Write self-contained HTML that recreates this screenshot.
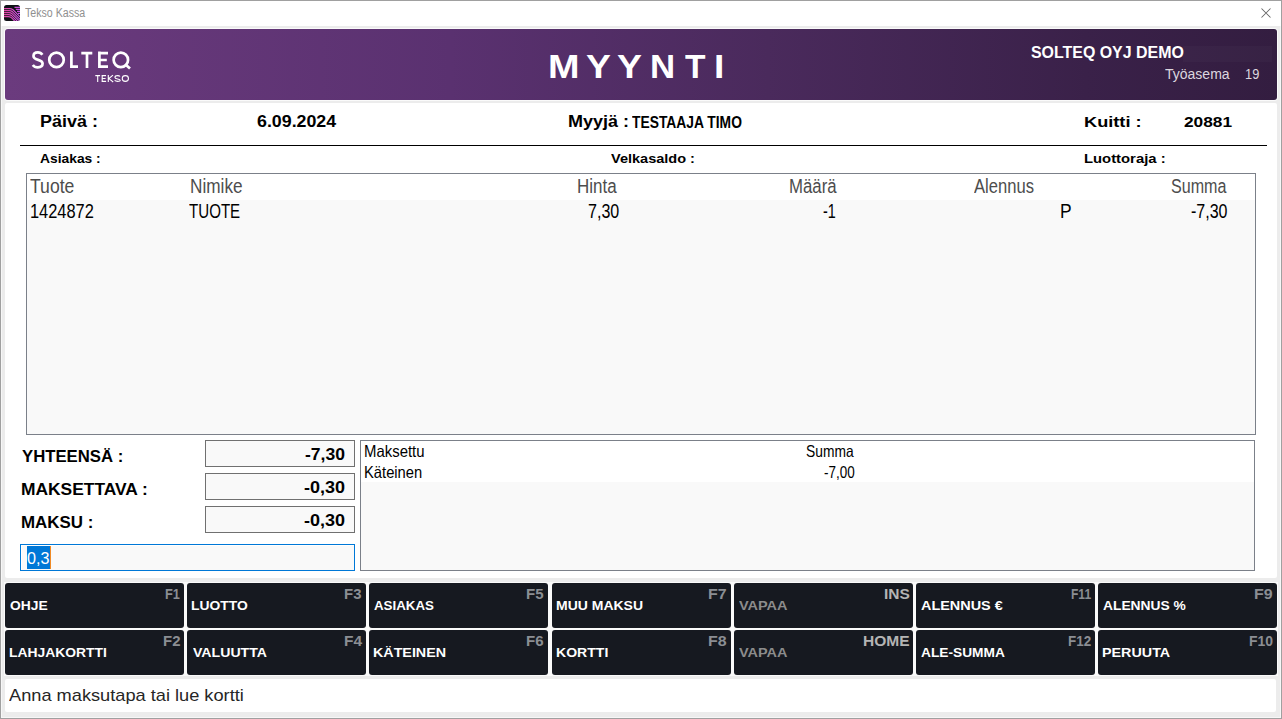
<!DOCTYPE html>
<html><head><meta charset="utf-8"><title>Tekso Kassa</title>
<style>
html,body{margin:0;padding:0;}
body{width:1282px;height:719px;overflow:hidden;position:relative;background:#eeeeee;font-family:"Liberation Sans",sans-serif;}
.t{position:absolute;white-space:nowrap;transform-origin:0 0;}
.btn{position:absolute;background:#161920;border-radius:3px;}
</style></head><body>

<div style="position:absolute;left:0px;top:0px;width:1282px;height:719px;background:#a0a0a0;"></div>
<div style="position:absolute;left:1px;top:1px;width:1280px;height:717px;background:#f7f7f7;"></div>
<div style="position:absolute;left:1px;top:1px;width:1279px;height:716px;background:#ececec;"></div>
<div style="position:absolute;left:1px;top:1px;width:1px;height:716px;background:#f7f7f7;"></div>
<div style="position:absolute;left:1px;top:1px;width:1280px;height:25px;background:#ffffff;"></div>
<svg style="position:absolute;left:4px;top:5px" width="16" height="16" viewBox="0 0 16 16">
<defs><clipPath id="ic"><rect x="0" y="0" width="16" height="16" rx="2.5"/></clipPath>
<linearGradient id="ig" gradientUnits="userSpaceOnUse" x1="0" y1="0" x2="16" y2="0"><stop offset="0" stop-color="#e2459e"/><stop offset="1" stop-color="#c653e6"/></linearGradient></defs>
<rect x="0" y="0" width="16" height="16" rx="2.5" fill="#101217"/>
<g clip-path="url(#ic)" fill="none" stroke="url(#ig)" stroke-width="1.15">
<path d="M-1 3.6 H5.5 Q7.5 3.6 9 4.8 L21 16.8"/>
<path d="M-1 5.6 H5.2 Q7.2 5.6 8.6 6.8 L18.5 16.8"/>
<path d="M-1 7.6 H4.8 Q6.8 7.6 8.2 8.8 L16.2 16.8"/>
<path d="M-1 9.6 H4.4 Q6.4 9.6 7.8 10.8 L13.8 16.8"/>
<path d="M-1 11.6 H3.5 Q5.8 11.4 7.4 12.6 L11.4 16.8"/>
<path d="M10.5 2.4 H17"/><path d="M11.8 4.4 H17"/><path d="M13 6.4 H17"/><path d="M14 8.4 H17"/>
</g></svg>
<span class="t" style="left:25.10px;top:6px;font-weight:400;font-size:13.08px;line-height:13.08px;color:#8f8f8f;transform:scaleX(0.8122);">Tekso Kassa</span>
<svg style="position:absolute;left:1260px;top:7px" width="12" height="12" viewBox="0 0 12 12">
<path d="M1.5 1.5 L10.5 10.5 M10.5 1.5 L1.5 10.5" stroke="#666666" stroke-width="1.05" fill="none"/></svg>
<div style="position:absolute;left:5px;top:29px;width:1272px;height:71px;box-shadow:0 0 0 1px #fafafa;background:linear-gradient(90deg,#6b3b7e 0%,#5a3170 35%,#4a2a5c 60%,#3a2149 85%,#331d40 100%);border-radius:3px;"></div>
<div style="position:absolute;left:1183px;top:46px;width:89px;height:16px;background:rgba(255,255,255,0.025);"></div>
<svg style="position:absolute;left:0;top:0" width="140" height="90" viewBox="0 0 140 90">
<g fill="none" stroke="#ffffff" stroke-width="2.7" stroke-linecap="butt">
<path d="M42.4 54.7 C41.4 53.2 39.7 52.4 37.9 52.4 C35.3 52.4 33.5 53.8 33.5 56.0 C33.5 61.2 42.6 58.6 42.6 63.6 C42.6 65.9 40.7 67.4 37.8 67.4 C35.7 67.4 33.9 66.5 32.8 65.0"/>
<circle cx="56.5" cy="59.9" r="7.25"/>
<path d="M71.4 51.6 V66.7 H78"/>
<path d="M81.3 53.2 H92.3 M87.0 53.2 V68"/>
<path d="M99.4 51.6 V68 M98.1 53.2 H108 M98.1 60.0 H106.8 M98.1 66.6 H108"/>
<circle cx="120.85" cy="59.9" r="7.2"/>
<path d="M125.2 64.2 L130.0 68.6"/>
</g>
<g fill="none" stroke="#ffffff" stroke-width="1.1">
<path d="M95.3 75.65 H100.1 M97.7 75.65 V82"/>
<path d="M102.2 75 V82 M101.6 75.65 H106 M101.6 78.5 H105.6 M101.6 81.35 H106.1"/>
<path d="M108.3 75 V82 M113 75.1 L108.9 78.6 L113.2 82"/>
<path d="M120.0 76.5 C119.6 75.95 118.7 75.65 117.6 75.65 C116.0 75.65 114.95 76.35 114.95 77.45 C114.95 79.6 120.25 78.4 120.25 80.5 C120.25 81.0 119.3 81.35 117.6 81.35 C116.3 81.35 115.3 81.0 114.6 80.4"/>
<ellipse cx="125.35" cy="78.5" rx="3.1" ry="2.85"/>
</g></svg>
<span class="t" style="left:547.59px;top:51px;font-weight:700;font-size:32.70px;line-height:32.70px;color:#ffffff;transform:scaleX(1.1565);">M</span>
<span class="t" style="left:586.06px;top:51px;font-weight:700;font-size:32.70px;line-height:32.70px;color:#ffffff;transform:scaleX(1.1400);">Y</span>
<span class="t" style="left:617.15px;top:51px;font-weight:700;font-size:32.70px;line-height:32.70px;color:#ffffff;transform:scaleX(1.1450);">Y</span>
<span class="t" style="left:650.47px;top:51px;font-weight:700;font-size:32.70px;line-height:32.70px;color:#ffffff;transform:scaleX(1.0650);">N</span>
<span class="t" style="left:684.50px;top:51px;font-weight:700;font-size:32.70px;line-height:32.70px;color:#ffffff;transform:scaleX(1.0250);">T</span>
<span class="t" style="left:714.22px;top:51px;font-weight:700;font-size:32.70px;line-height:32.70px;color:#ffffff;transform:scaleX(1.1400);">I</span>
<span class="t" style="left:1031.08px;top:45px;font-weight:700;font-size:15.70px;line-height:15.70px;color:#ffffff;transform:scaleX(1.0154);">SOLTEQ OYJ DEMO</span>
<span class="t" style="left:1164.70px;top:67px;font-weight:400;font-size:14.39px;line-height:14.39px;color:#dcd6df;transform:scaleX(0.9742);">Työasema</span>
<span class="t" style="left:1244.91px;top:67px;font-weight:400;font-size:14.39px;line-height:14.39px;color:#dcd6df;transform:scaleX(0.8929);">19</span>
<div style="position:absolute;left:5px;top:103px;width:1272px;height:475px;background:#ffffff;border-radius:2px;"></div>
<span class="t" style="left:39.61px;top:113px;font-weight:700;font-size:16.42px;line-height:16.42px;color:#000000;transform:scaleX(1.0941);">Päivä :</span>
<span class="t" style="left:257.22px;top:113px;font-weight:700;font-size:16.42px;line-height:16.42px;color:#000000;transform:scaleX(1.0847);">6.09.2024</span>
<span class="t" style="left:567.88px;top:113px;font-weight:700;font-size:16.13px;line-height:16.13px;color:#000000;transform:scaleX(1.1173);">Myyjä :</span>
<span class="t" style="left:632.10px;top:114px;font-weight:700;font-size:16.42px;line-height:16.42px;color:#000000;transform:scaleX(0.8431);">TESTAAJA TIMO</span>
<span class="t" style="left:1083.83px;top:114px;font-weight:700;font-size:15.55px;line-height:15.55px;color:#000000;transform:scaleX(1.1702);">Kuitti :</span>
<span class="t" style="left:1184.00px;top:114px;font-weight:700;font-size:15.55px;line-height:15.55px;color:#000000;transform:scaleX(1.1116);">20881</span>
<span class="t" style="left:40.30px;top:152px;font-weight:700;font-size:13.37px;line-height:13.37px;color:#000000;transform:scaleX(1.0345);">Asiakas :</span>
<span class="t" style="left:610.70px;top:152px;font-weight:700;font-size:13.52px;line-height:13.52px;color:#000000;transform:scaleX(1.0740);">Velkasaldo :</span>
<span class="t" style="left:1083.85px;top:153px;font-weight:700;font-size:12.94px;line-height:12.94px;color:#000000;transform:scaleX(1.1464);">Luottoraja :</span>
<div style="position:absolute;left:20px;top:145px;width:1247px;height:1px;background:#000000;"></div>
<div style="position:absolute;left:26px;top:173px;width:1230px;height:262px;box-sizing:border-box;border:1px solid #7b8089;background:#f9f9f9;"></div>
<div style="position:absolute;left:27px;top:174px;width:1228px;height:26px;background:#ffffff;"></div>
<span class="t" style="left:30.20px;top:177px;font-weight:400;font-size:19.91px;line-height:19.91px;color:#4d4d4d;transform:scaleX(0.8837);">Tuote</span>
<span class="t" style="left:190.47px;top:177px;font-weight:400;font-size:19.91px;line-height:19.91px;color:#4d4d4d;transform:scaleX(0.8638);">Nimike</span>
<span class="t" style="left:577.09px;top:177px;font-weight:400;font-size:19.91px;line-height:19.91px;color:#4d4d4d;transform:scaleX(0.8533);">Hinta</span>
<span class="t" style="left:789.21px;top:177px;font-weight:400;font-size:19.91px;line-height:19.91px;color:#4d4d4d;transform:scaleX(0.8426);">Määrä</span>
<span class="t" style="left:974.20px;top:177px;font-weight:400;font-size:19.91px;line-height:19.91px;color:#4d4d4d;transform:scaleX(0.8338);">Alennus</span>
<span class="t" style="left:1170.59px;top:177px;font-weight:400;font-size:19.91px;line-height:19.91px;color:#4d4d4d;transform:scaleX(0.8088);">Summa</span>
<span class="t" style="left:29.89px;top:201px;font-weight:400;font-size:20.35px;line-height:20.35px;color:#000000;transform:scaleX(0.8065);">1424872</span>
<span class="t" style="left:188.50px;top:201px;font-weight:400;font-size:20.35px;line-height:20.35px;color:#000000;transform:scaleX(0.7426);">TUOTE</span>
<span class="t" style="left:588.01px;top:201px;font-weight:400;font-size:20.35px;line-height:20.35px;color:#000000;transform:scaleX(0.7895);">7,30</span>
<span class="t" style="left:823.39px;top:201px;font-weight:400;font-size:20.35px;line-height:20.35px;color:#000000;transform:scaleX(0.7062);">-1</span>
<span class="t" style="left:1060.19px;top:201px;font-weight:400;font-size:20.35px;line-height:20.35px;color:#000000;transform:scaleX(0.8545);">P</span>
<span class="t" style="left:1191.31px;top:201px;font-weight:400;font-size:20.35px;line-height:20.35px;color:#000000;transform:scaleX(0.7867);">-7,30</span>
<span class="t" style="left:21.70px;top:448px;font-weight:700;font-size:16.28px;line-height:16.28px;color:#000000;transform:scaleX(1.0278);">YHTEENSÄ :</span>
<span class="t" style="left:20.91px;top:482px;font-weight:700;font-size:15.99px;line-height:15.99px;color:#000000;transform:scaleX(1.0877);">MAKSETTAVA :</span>
<span class="t" style="left:20.94px;top:515px;font-weight:700;font-size:15.99px;line-height:15.99px;color:#000000;transform:scaleX(1.0576);">MAKSU :</span>
<div style="position:absolute;left:205px;top:440px;width:150px;height:27px;box-sizing:border-box;border:1px solid #707070;background:#f9f9f9;"></div>
<div style="position:absolute;left:205px;top:473px;width:150px;height:27px;box-sizing:border-box;border:1px solid #707070;background:#f9f9f9;"></div>
<div style="position:absolute;left:205px;top:506px;width:150px;height:27px;box-sizing:border-box;border:1px solid #707070;background:#f9f9f9;"></div>
<span class="t" style="left:304.90px;top:447px;font-weight:700;font-size:15.99px;line-height:15.99px;color:#000000;transform:scaleX(1.0971);">-7,30</span>
<span class="t" style="left:303.87px;top:480px;font-weight:700;font-size:15.99px;line-height:15.99px;color:#000000;transform:scaleX(1.1257);">-0,30</span>
<span class="t" style="left:303.87px;top:513px;font-weight:700;font-size:15.99px;line-height:15.99px;color:#000000;transform:scaleX(1.1257);">-0,30</span>
<div style="position:absolute;left:20px;top:544px;width:335px;height:27px;box-sizing:border-box;border:1px solid #0078d7;background:#f9f9f9;"></div>
<div style="position:absolute;left:21px;top:545px;width:333px;height:25px;box-sizing:border-box;border:1px solid #ffffff;border-right:0;border-bottom:0;"></div>
<div style="position:absolute;left:27px;top:546px;width:24px;height:23px;background:#0078d7;"></div>
<div style="position:absolute;left:50px;top:546px;width:1px;height:23px;background:#f08a24;"></div>
<span class="t" style="left:26.99px;top:551px;font-weight:400;font-size:15.99px;line-height:15.99px;color:#ffffff;transform:scaleX(1.0095);">0,3</span>
<div style="position:absolute;left:360px;top:440px;width:895px;height:131px;box-sizing:border-box;border:1px solid #7b8089;background:#f9f9f9;"></div>
<div style="position:absolute;left:361px;top:441px;width:893px;height:41px;background:#ffffff;"></div>
<span class="t" style="left:363.51px;top:444px;font-weight:400;font-size:16.72px;line-height:16.72px;color:#000000;transform:scaleX(0.8939);">Maksettu</span>
<span class="t" style="left:806.47px;top:444px;font-weight:400;font-size:16.72px;line-height:16.72px;color:#000000;transform:scaleX(0.8263);">Summa</span>
<span class="t" style="left:363.92px;top:465px;font-weight:400;font-size:16.72px;line-height:16.72px;color:#000000;transform:scaleX(0.8828);">Käteinen</span>
<span class="t" style="left:824.29px;top:465px;font-weight:400;font-size:16.72px;line-height:16.72px;color:#000000;transform:scaleX(0.8054);">-7,00</span>
<div style="position:absolute;left:4px;top:582px;width:1274px;height:94px;background:#fafafa;"></div>
<div class="btn" style="left:5px;top:583px;width:179px;height:45px;"></div>
<div class="btn" style="left:5px;top:630px;width:179px;height:45px;"></div>
<div class="btn" style="left:187px;top:583px;width:179px;height:45px;"></div>
<div class="btn" style="left:187px;top:630px;width:179px;height:45px;"></div>
<div class="btn" style="left:369px;top:583px;width:179px;height:45px;"></div>
<div class="btn" style="left:369px;top:630px;width:179px;height:45px;"></div>
<div class="btn" style="left:551.5px;top:583px;width:179.5px;height:45px;"></div>
<div class="btn" style="left:551.5px;top:630px;width:179.5px;height:45px;"></div>
<div class="btn" style="left:734px;top:583px;width:179px;height:45px;"></div>
<div class="btn" style="left:734px;top:630px;width:179px;height:45px;"></div>
<div class="btn" style="left:916px;top:583px;width:179px;height:45px;"></div>
<div class="btn" style="left:916px;top:630px;width:179px;height:45px;"></div>
<div class="btn" style="left:1098px;top:583px;width:179px;height:45px;"></div>
<div class="btn" style="left:1098px;top:630px;width:179px;height:45px;"></div>
<span class="t" style="left:10.30px;top:599px;font-weight:700;font-size:13.08px;line-height:13.08px;color:#ffffff;transform:scaleX(1.0600);">OHJE</span>
<span class="t" style="left:164.89px;top:587px;font-weight:700;font-size:14.10px;line-height:14.10px;color:#8b8e93;transform:scaleX(0.9067);">F1</span>
<span class="t" style="left:9.24px;top:646px;font-weight:700;font-size:13.08px;line-height:13.08px;color:#ffffff;transform:scaleX(1.0604);">LAHJAKORTTI</span>
<span class="t" style="left:162.64px;top:634px;font-weight:700;font-size:14.10px;line-height:14.10px;color:#8b8e93;transform:scaleX(1.0600);">F2</span>
<span class="t" style="left:191.44px;top:599px;font-weight:700;font-size:13.08px;line-height:13.08px;color:#ffffff;transform:scaleX(1.0596);">LUOTTO</span>
<span class="t" style="left:344.34px;top:587px;font-weight:700;font-size:14.10px;line-height:14.10px;color:#8b8e93;transform:scaleX(1.0600);">F3</span>
<span class="t" style="left:192.50px;top:646px;font-weight:700;font-size:13.08px;line-height:13.08px;color:#ffffff;transform:scaleX(1.0794);">VALUUTTA</span>
<span class="t" style="left:343.70px;top:634px;font-weight:700;font-size:14.10px;line-height:14.10px;color:#8b8e93;transform:scaleX(1.1000);">F4</span>
<span class="t" style="left:374.20px;top:599px;font-weight:700;font-size:13.08px;line-height:13.08px;color:#ffffff;transform:scaleX(1.0186);">ASIAKAS</span>
<span class="t" style="left:526.43px;top:587px;font-weight:700;font-size:14.10px;line-height:14.10px;color:#8b8e93;transform:scaleX(1.0667);">F5</span>
<span class="t" style="left:373.11px;top:646px;font-weight:700;font-size:13.08px;line-height:13.08px;color:#ffffff;transform:scaleX(1.0923);">KÄTEINEN</span>
<span class="t" style="left:526.43px;top:634px;font-weight:700;font-size:14.10px;line-height:14.10px;color:#8b8e93;transform:scaleX(1.0667);">F6</span>
<span class="t" style="left:556.33px;top:599px;font-weight:700;font-size:13.08px;line-height:13.08px;color:#ffffff;transform:scaleX(1.0700);">MUU MAKSU</span>
<span class="t" style="left:708.47px;top:587px;font-weight:700;font-size:14.10px;line-height:14.10px;color:#8b8e93;transform:scaleX(1.1333);">F7</span>
<span class="t" style="left:556.33px;top:646px;font-weight:700;font-size:13.08px;line-height:13.08px;color:#ffffff;transform:scaleX(1.0745);">KORTTI</span>
<span class="t" style="left:708.47px;top:634px;font-weight:700;font-size:14.10px;line-height:14.10px;color:#8b8e93;transform:scaleX(1.1333);">F8</span>
<span class="t" style="left:739.30px;top:599px;font-weight:700;font-size:13.08px;line-height:13.08px;color:#8c8c8c;transform:scaleX(1.1068);">VAPAA</span>
<span class="t" style="left:883.50px;top:587px;font-weight:700;font-size:14.10px;line-height:14.10px;color:#b4b4b4;transform:scaleX(1.1000);">INS</span>
<span class="t" style="left:739.30px;top:646px;font-weight:700;font-size:13.08px;line-height:13.08px;color:#8c8c8c;transform:scaleX(1.1068);">VAPAA</span>
<span class="t" style="left:862.50px;top:634px;font-weight:700;font-size:14.10px;line-height:14.10px;color:#b4b4b4;transform:scaleX(1.1024);">HOME</span>
<span class="t" style="left:921.20px;top:599px;font-weight:700;font-size:13.08px;line-height:13.08px;color:#ffffff;transform:scaleX(1.1027);">ALENNUS €</span>
<span class="t" style="left:1070.55px;top:587px;font-weight:700;font-size:14.10px;line-height:14.10px;color:#8b8e93;transform:scaleX(0.8545);">F11</span>
<span class="t" style="left:921.20px;top:646px;font-weight:700;font-size:13.08px;line-height:13.08px;color:#ffffff;transform:scaleX(1.0487);">ALE-SUMMA</span>
<span class="t" style="left:1067.65px;top:634px;font-weight:700;font-size:14.10px;line-height:14.10px;color:#8b8e93;transform:scaleX(0.9522);">F12</span>
<span class="t" style="left:1103.20px;top:599px;font-weight:700;font-size:13.08px;line-height:13.08px;color:#ffffff;transform:scaleX(1.0551);">ALENNUS %</span>
<span class="t" style="left:1254.37px;top:587px;font-weight:700;font-size:14.10px;line-height:14.10px;color:#8b8e93;transform:scaleX(1.1333);">F9</span>
<span class="t" style="left:1102.10px;top:646px;font-weight:700;font-size:13.08px;line-height:13.08px;color:#ffffff;transform:scaleX(1.0951);">PERUUTA</span>
<span class="t" style="left:1248.71px;top:634px;font-weight:700;font-size:14.10px;line-height:14.10px;color:#8b8e93;transform:scaleX(0.9913);">F10</span>
<div style="position:absolute;left:5px;top:679px;width:1271px;height:33px;background:#ffffff;border-radius:2px;"></div>
<span class="t" style="left:9.10px;top:688px;font-weight:400;font-size:15.70px;line-height:15.70px;color:#262626;transform:scaleX(1.1607);">Anna maksutapa tai lue kortti</span>
</body></html>
